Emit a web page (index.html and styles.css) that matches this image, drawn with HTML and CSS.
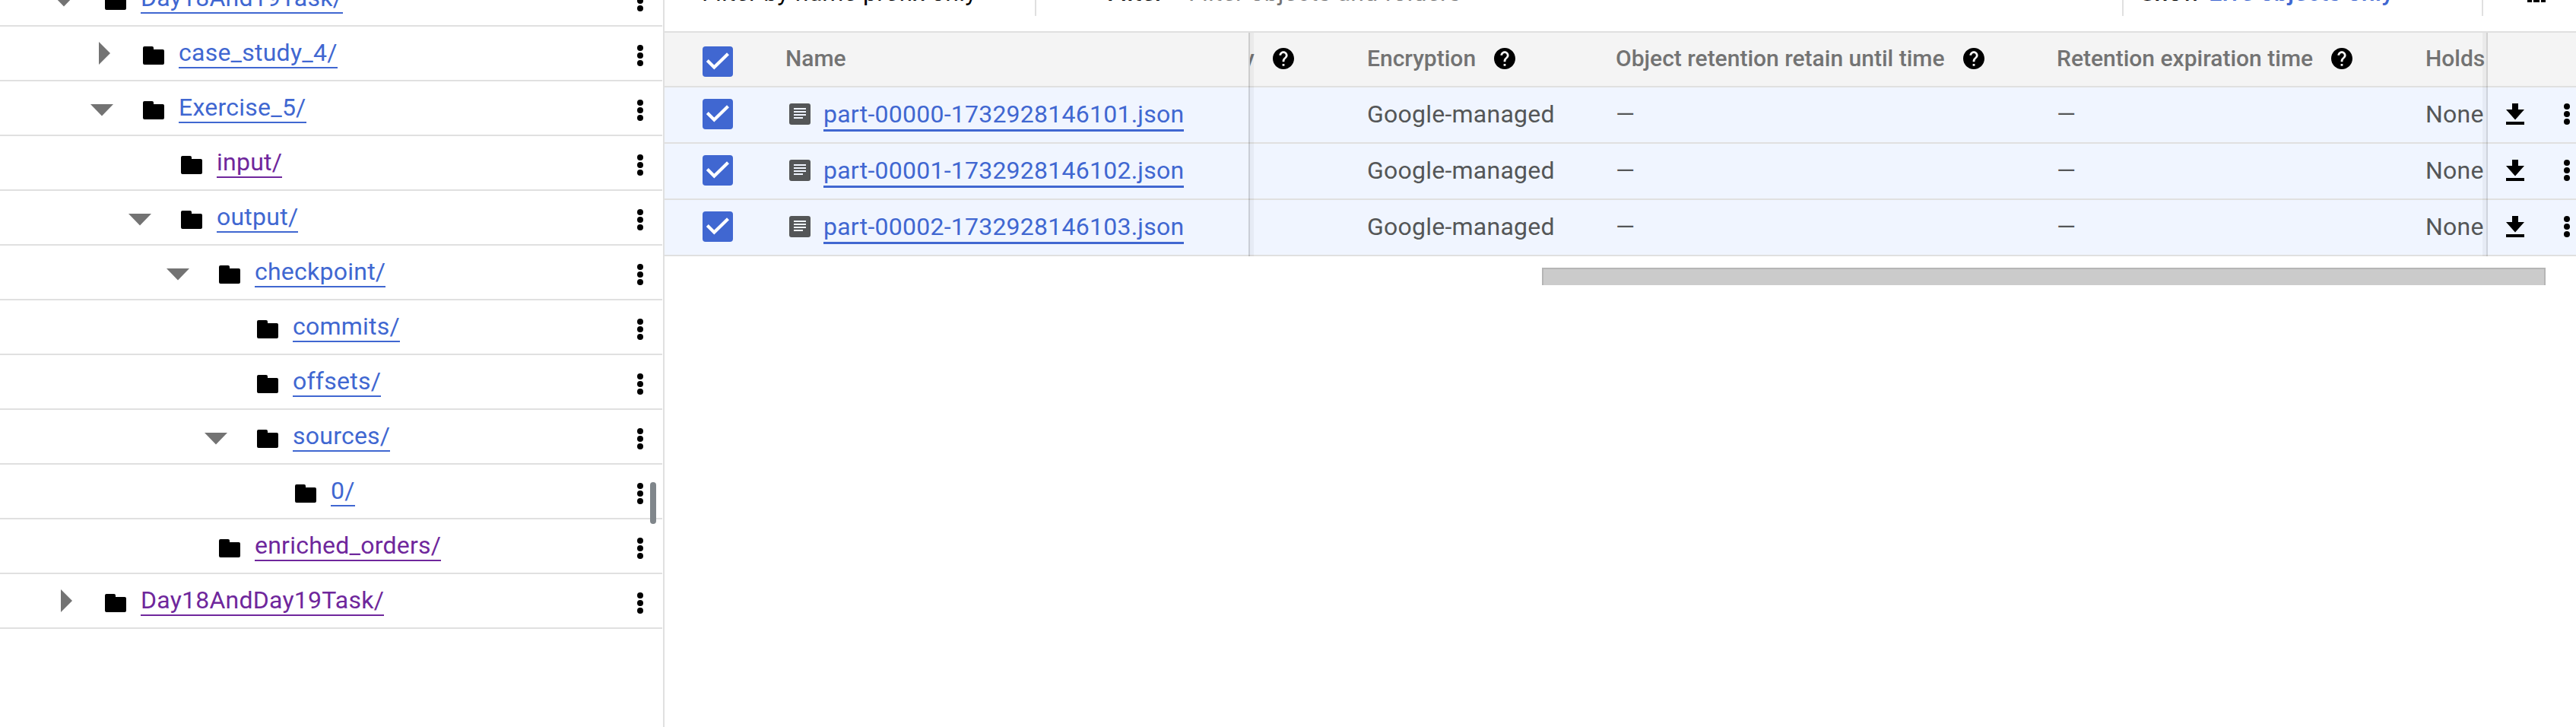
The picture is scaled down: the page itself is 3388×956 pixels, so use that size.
FILE: index.html
```
<!DOCTYPE html>
<html lang="en">
<head>
<meta charset="utf-8">
<title>Bucket objects</title>
<link rel="stylesheet" href="styles.css">
</head>
<body>
<svg class="defs" aria-hidden="true">
  <symbol id="folder" viewBox="0 0 28 24"><path d="M2 0h10q2 0 2 2v2h12q2 0 2 2v16q0 2-2 2H2q-2 0-2-2V2Q0 0 2 0z"/></symbol>
  <symbol id="down" viewBox="0 0 30 16"><path d="M0 0h30L15 15.5z"/></symbol>
  <symbol id="right" viewBox="0 0 15 30"><path d="M0 0v30L15 15z"/></symbol>
  <symbol id="dots" viewBox="0 0 8 28"><circle cx="4" cy="4" r="4"/><circle cx="4" cy="14" r="4"/><circle cx="4" cy="24" r="4"/></symbol>
  <symbol id="check" viewBox="0 0 40 40"><path d="M6.300 18.500L15.300 27.500L33.500 9.700" fill="none" stroke="#fff" stroke-width="4.200"/></symbol>
  <symbol id="doc" viewBox="0 0 28 28"><rect width="28" height="28" rx="3"/><path d="M6 6h16v2H6zM6 10h16v2H6zM6 14h16v2H6zM6 18h12v2H6z" fill="#f0f5ff"/></symbol>
  <symbol id="help" viewBox="2 2 20 20"><path d="M12 2C6.480 2 2 6.480 2 12s4.480 10 10 10 10-4.480 10-10S17.520 2 12 2zm1 17h-2v-2h2v2zm2.070-7.750l-.9.920C13.450 12.900 13 13.500 13 15h-2v-.5c0-1.100.450-2.100 1.170-2.830l1.240-1.260c.370-.360.590-.860.590-1.410 0-1.100-.9-2-2-2s-2 .9-2 2H8c0-2.210 1.790-4 4-4s4 1.790 4 4c0 .880-.360 1.680-.930 2.250z"/></symbol>
  <symbol id="download" viewBox="0 0 24 28"><path d="M8 0h8v8h8L12 21.500 0 8h8zM0 24h24v4H0z"/></symbol>
  <symbol id="columns" viewBox="0 0 24 24"><path d="M0 0h6v24H0zM8 0h8v24H8zM18 0h6v24h-6z"/></symbol>
</svg>
<div class="app">
  <nav class="tree">
    <div class="node l0"><span class="toggle"><svg class="down"><use href="#down"/></svg></span><svg class="folder"><use href="#folder"/></svg><a>Day18And19Task/</a><svg class="dots"><use href="#dots"/></svg></div>
    <div class="node l1"><span class="toggle"><svg class="right"><use href="#right"/></svg></span><svg class="folder"><use href="#folder"/></svg><a>case_study_4/</a><svg class="dots"><use href="#dots"/></svg></div>
    <div class="node l1"><span class="toggle"><svg class="down"><use href="#down"/></svg></span><svg class="folder"><use href="#folder"/></svg><a>Exercise_5/</a><svg class="dots"><use href="#dots"/></svg></div>
    <div class="node l2"><span class="toggle"></span><svg class="folder"><use href="#folder"/></svg><a class="visited">input/</a><svg class="dots"><use href="#dots"/></svg></div>
    <div class="node l2"><span class="toggle"><svg class="down"><use href="#down"/></svg></span><svg class="folder"><use href="#folder"/></svg><a>output/</a><svg class="dots"><use href="#dots"/></svg></div>
    <div class="node l3"><span class="toggle"><svg class="down"><use href="#down"/></svg></span><svg class="folder"><use href="#folder"/></svg><a>checkpoint/</a><svg class="dots"><use href="#dots"/></svg></div>
    <div class="node l4"><span class="toggle"></span><svg class="folder"><use href="#folder"/></svg><a>commits/</a><svg class="dots"><use href="#dots"/></svg></div>
    <div class="node l4"><span class="toggle"></span><svg class="folder"><use href="#folder"/></svg><a>offsets/</a><svg class="dots"><use href="#dots"/></svg></div>
    <div class="node l4"><span class="toggle"><svg class="down"><use href="#down"/></svg></span><svg class="folder"><use href="#folder"/></svg><a>sources/</a><svg class="dots"><use href="#dots"/></svg></div>
    <div class="node l5"><span class="toggle"></span><svg class="folder"><use href="#folder"/></svg><a>0/</a><svg class="dots"><use href="#dots"/></svg></div>
    <div class="node l3"><span class="toggle"></span><svg class="folder"><use href="#folder"/></svg><a class="visited">enriched_orders/</a><svg class="dots"><use href="#dots"/></svg></div>
    <div class="node l0"><span class="toggle"><svg class="right"><use href="#right"/></svg></span><svg class="folder"><use href="#folder"/></svg><a class="visited">Day18AndDay19Task/</a><svg class="dots"><use href="#dots"/></svg></div>
    <div class="resizer"></div>
  </nav>
  <main class="main">
    <div class="toolbar">
      <div class="prefix">Filter by name prefix only</div>
      <div class="filter"><b>Filter</b><span>Filter objects and folders</span></div>
      <div class="show"><b>Show</b><span>Live objects only</span></div>
      <div class="cols"><svg><use href="#columns"/></svg></div>
    </div>
    <div class="table">
      <div class="row head">
        <div class="pick"><svg class="box"><use href="#check"/></svg></div>
        <div class="name">Name</div>
        <div class="hist"><span>y</span><svg class="help"><use href="#help"/></svg></div>
        <div class="enc">Encryption<svg class="help"><use href="#help"/></svg></div>
        <div class="retain">Object retention retain until time<svg class="help"><use href="#help"/></svg></div>
        <div class="expire">Retention expiration time<svg class="help"><use href="#help"/></svg></div>
        <div class="holds">Holds</div>
        <div class="actions"></div>
      </div>
      <div class="row">
        <div class="pick"><svg class="box"><use href="#check"/></svg></div>
        <div class="name"><svg class="doc"><use href="#doc"/></svg><a>part-00000-1732928146101.json</a></div>
        <div class="hist"></div><div class="enc">Google-managed</div><div class="retain">—</div><div class="expire">—</div><div class="holds">None</div>
        <div class="actions"><svg class="download"><use href="#download"/></svg><svg class="dots"><use href="#dots"/></svg></div>
      </div>
      <div class="row">
        <div class="pick"><svg class="box"><use href="#check"/></svg></div>
        <div class="name"><svg class="doc"><use href="#doc"/></svg><a>part-00001-1732928146102.json</a></div>
        <div class="hist"></div><div class="enc">Google-managed</div><div class="retain">—</div><div class="expire">—</div><div class="holds">None</div>
        <div class="actions"><svg class="download"><use href="#download"/></svg><svg class="dots"><use href="#dots"/></svg></div>
      </div>
      <div class="row">
        <div class="pick"><svg class="box"><use href="#check"/></svg></div>
        <div class="name"><svg class="doc"><use href="#doc"/></svg><a>part-00002-1732928146103.json</a></div>
        <div class="hist"></div><div class="enc">Google-managed</div><div class="retain">—</div><div class="expire">—</div><div class="holds">None</div>
        <div class="actions"><svg class="download"><use href="#download"/></svg><svg class="dots"><use href="#dots"/></svg></div>
      </div>
      <div class="edge edge-left"></div>
      <div class="edge edge-right"></div>
    </div>
    <div class="scrollbar"></div>
  </main>
</div>
</body>
</html>
```
FILE: styles.css
```
* { box-sizing: border-box; }
body { margin: 0; background: #fff; font-family: Roboto, sans-serif; font-size: 32px; letter-spacing: .24px; color: #545657; overflow: hidden; }
.defs { display: none; }
svg { display: block; flex: none; fill: #000; }
.app { display: flex; width: 3388px; height: 956px; overflow: hidden; }

/* folder tree */
.tree { position: relative; width: 874px; flex: none; border-right: 2px solid #e0e0e0; margin-top: -37px; height: 993px; padding-right: 1px; }
.node { display: flex; align-items: flex-start; height: 72px; border-bottom: 2px solid #e0e0e0; padding-right: 25px; }
.l0 { padding-left: 64px; }
.l1 { padding-left: 114px; }
.l2 { padding-left: 164px; }
.l3 { padding-left: 214px; }
.l4 { padding-left: 264px; }
.l5 { padding-left: 314px; }
.toggle { width: 40px; height: 70px; display: flex; justify-content: center; align-items: flex-start; flex: none; }
.toggle svg { fill: #737373; }
.down { width: 30px; height: 16px; margin-top: 30px; }
.right { width: 15px; height: 30px; margin-top: 19.500px; margin-left: 7px; }
.folder { width: 28px; height: 24px; margin: 26px 19px 0 34px; }
.node a { line-height: 38px; margin-top: 15px; height: 40px; border-bottom: 2px solid #4067d1; color: #4067d1; white-space: nowrap; }
.node a.visited { color: #6f279c; border-color: #6f279c; }
.dots { width: 8px; height: 28px; }
.node .dots { margin: 24px 0 0 auto; }
.resizer { position: absolute; left: 855px; top: 671px; width: 8px; height: 55px; border-radius: 4px; background: #80868b; }

/* toolbar */
.main { flex: 1; min-width: 0; }
.toolbar { display: flex; height: 21px; line-height: 38px; font-weight: 500; color: #000; white-space: nowrap; overflow: hidden; margin-bottom: 20px; }
.toolbar > div { margin-top: -29px; height: 50px; display: flex; align-items: flex-start; }
.prefix { width: 489px; padding-left: 49px; border-right: 2px solid #e0e0e0; font-weight: 400; }
.filter { width: 1430px; padding-left: 93px; border-right: 2px solid #e0e0e0; }
.toolbar b { font-weight: 500; }
.filter b { width: 107px; }
.filter span { font-weight: 400; color: #737373; }
.show { width: 473px; padding-left: 21px; border-right: 2px solid #e0e0e0; }
.show b { width: 91px; }
.show span { color: #4067d1; }
.cols { padding-left: 58px; }
.cols svg { width: 24px; height: 24px; margin-top: 8px; }

/* objects table */
.table { position: relative; border-top: 2px solid #e0e0e0; }
.row { display: grid; grid-template-columns: 159px 611px 154px 327px 580px 485px 82px 116px; height: 74px; border-bottom: 2px solid #e0e0e0; background: #f0f5ff; white-space: nowrap; line-height: 38px; }
.row > div { display: flex; align-items: flex-start; padding-top: 16px; overflow: hidden; }
.row.head { height: 72px; background: #f4f4f4; color: #737373; font-size: 30px; font-weight: 500; line-height: 36px; letter-spacing: 0; }
.row.head > div { padding-top: 16px; }
.row > .pick { padding: 15px 0 0 50px; }
.row.head > .pick { padding-top: 18px; }
.box { width: 40px; height: 40px; border-radius: 4px; background: #4067d1; }
.doc { width: 28px; height: 28px; margin: 5px 17px 0 5px; fill: #545657; }
.name a { color: #4067d1; border-bottom: 3px solid #4067d1; height: 42px; }
.hist span { width: 15px; margin-left: -9px; }
.help { width: 28px; height: 28px; margin: 4px 0 0 24px; }
.row > .actions { padding: 21px 0 0 24px; gap: 52px; }
.download { width: 24px; height: 28px; }
.edge { position: absolute; top: 0; bottom: 0; }
.edge-left { left: 768px; width: 7px; border-left: 2px solid rgba(0,0,0,.12); background: rgba(0,0,0,.04); }
.edge-right { left: 2391px; width: 7px; border-right: 2px solid rgba(0,0,0,.1); background: rgba(0,0,0,.04); }
.scrollbar { margin: 15px 0 0 1154px; width: 1320px; height: 23px; background: #cbcbcb; border: 2px solid #b5b5b5; border-bottom: 0; }
```
